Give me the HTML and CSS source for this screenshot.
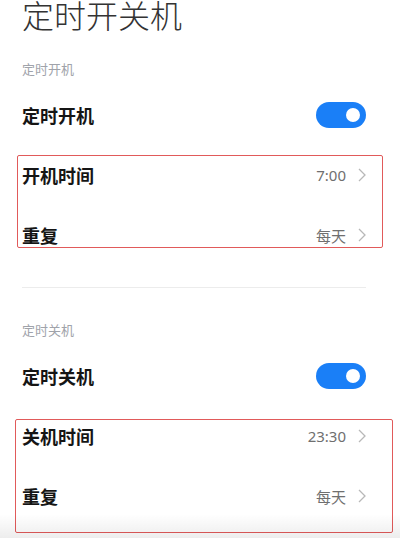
FILE: index.html
```html
<!DOCTYPE html>
<html lang="zh-CN">
<head>
<meta charset="utf-8">
<title>定时开关机</title>
<link rel="stylesheet" href="styles.css">
</head>
<body>
<div class="page">
  <h1 class="title">定时开关机</h1>

  <div class="section-label first">定时开机</div>
  <div class="row">
    <span class="label">定时开机</span>
    <span class="toggle"><span class="knob"></span></span>
  </div>
  <div class="group">
    <div class="row">
      <span class="label">开机时间</span>
      <span class="value">7:00<svg class="chev" viewBox="0 0 8 14" width="8" height="14"><polyline points="1,1 7,7 1,13" fill="none" stroke="#b8b8b8" stroke-width="1.3"/></svg></span>
    </div>
    <div class="row">
      <span class="label">重复</span>
      <span class="value">每天<svg class="chev" viewBox="0 0 8 14" width="8" height="14"><polyline points="1,1 7,7 1,13" fill="none" stroke="#b8b8b8" stroke-width="1.3"/></svg></span>
    </div>
    <div class="mark mark-a"></div>
  </div>

  <div class="divider"></div>

  <div class="section-label second">定时关机</div>
  <div class="row">
    <span class="label">定时关机</span>
    <span class="toggle"><span class="knob"></span></span>
  </div>
  <div class="group">
    <div class="row">
      <span class="label">关机时间</span>
      <span class="value">23:30<svg class="chev" viewBox="0 0 8 14" width="8" height="14"><polyline points="1,1 7,7 1,13" fill="none" stroke="#b8b8b8" stroke-width="1.3"/></svg></span>
    </div>
    <div class="row">
      <span class="label">重复</span>
      <span class="value">每天<svg class="chev" viewBox="0 0 8 14" width="8" height="14"><polyline points="1,1 7,7 1,13" fill="none" stroke="#b8b8b8" stroke-width="1.3"/></svg></span>
    </div>
    <div class="mark mark-b"></div>
  </div>
</div>
<div class="fade"></div>
</body>
</html>
```
FILE: styles.css
```css
html, body {
  margin: 0;
  padding: 0;
  background: #ffffff;
}
body {
  font-family: "Noto Sans", "Noto Sans CJK SC", sans-serif;
  width: 400px;
  height: 538px;
  overflow: hidden;
  position: relative;
}
.page {
  padding: 0 34px 0 22px;
}
.title {
  margin: 0;
  font-size: 32px;
  line-height: 32px;
  font-weight: 300;
  color: #333333;
}
.section-label {
  font-size: 13px;
  line-height: 32px;
  height: 32px;
  color: #a0a3aa;
}
.section-label.first {
  margin-top: 21px;
}
.section-label.second {
  margin-top: 26px;
}
.row {
  height: 60px;
  display: flex;
  align-items: center;
  justify-content: space-between;
}
.label {
  font-size: 18px;
  font-weight: 700;
  color: #151515;
}
.value {
  display: flex;
  align-items: center;
  gap: 12px;
  font-size: 15px;
  color: #6f6f6f;
}
.chev {
  display: block;
}
.toggle {
  width: 50px;
  height: 26px;
  border-radius: 13px;
  background: #1a7ff7;
  position: relative;
}
.knob {
  position: absolute;
  right: 6px;
  top: 6px;
  width: 14px;
  height: 14px;
  border-radius: 50%;
  background: #ffffff;
}
.group {
  position: relative;
}
.mark {
  position: absolute;
  border: 1.5px solid #e15a5a;
  border-radius: 2px;
  box-sizing: border-box;
}
.mark-a {
  top: 10px;
  left: -5px;
  width: 366px;
  height: 93px;
}
.mark-b {
  top: 13px;
  left: -7px;
  width: 378px;
  height: 114px;
}
.divider {
  margin-top: 22px;
  height: 1px;
  background: #ececec;
}
.fade {
  position: absolute;
  left: 0;
  right: 0;
  bottom: 0;
  height: 24px;
  background: linear-gradient(to bottom, rgba(0,0,0,0), rgba(0,0,0,0.07));
  pointer-events: none;
}
```
